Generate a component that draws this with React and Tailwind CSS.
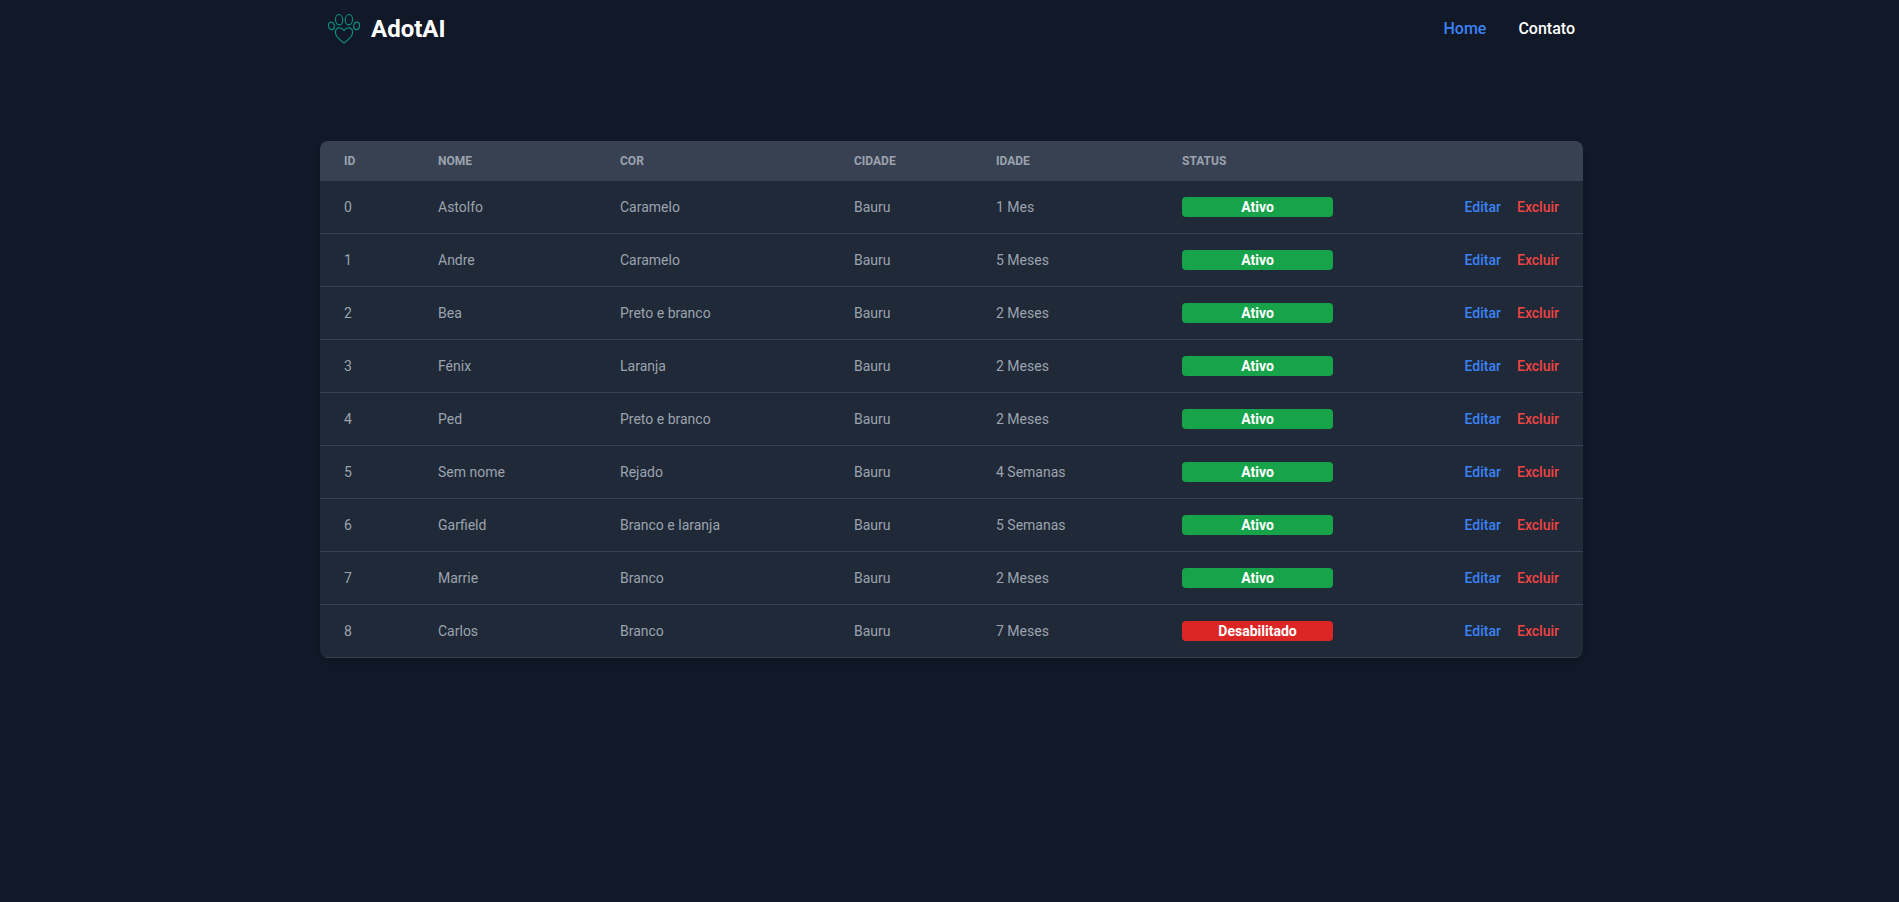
const navLinks = [
  { label: 'Home', className: 'text-[#3b82f6]' },
  { label: 'Contato', className: 'text-white' },
];

const pets = [
  { id: 0, name: 'Astolfo', color: 'Caramelo', city: 'Bauru', age: '1 Mes', active: true },
  { id: 1, name: 'Andre', color: 'Caramelo', city: 'Bauru', age: '5 Meses', active: true },
  { id: 2, name: 'Bea', color: 'Preto e branco', city: 'Bauru', age: '2 Meses', active: true },
  { id: 3, name: 'Fénix', color: 'Laranja', city: 'Bauru', age: '2 Meses', active: true },
  { id: 4, name: 'Ped', color: 'Preto e branco', city: 'Bauru', age: '2 Meses', active: true },
  { id: 5, name: 'Sem nome', color: 'Rejado', city: 'Bauru', age: '4 Semanas', active: true },
  { id: 6, name: 'Garfield', color: 'Branco e laranja', city: 'Bauru', age: '5 Semanas', active: true },
  { id: 7, name: 'Marrie', color: 'Branco', city: 'Bauru', age: '2 Meses', active: true },
  { id: 8, name: 'Carlos', color: 'Branco', city: 'Bauru', age: '7 Meses', active: false },
];

const columns = ['ID', 'Nome', 'Cor', 'Cidade', 'Idade', 'Status'];

function PawLogo() {
  return (
    <svg
      className="h-8 w-8"
      viewBox="0 1 32 32"
      fill="none"
      stroke="#0d8b80"
      strokeWidth="1.2"
      strokeLinejoin="round"
      aria-hidden="true"
    >
      <ellipse cx="3.4" cy="13.9" rx="2.9" ry="3.8" transform="rotate(-8 3.4 13.9)" />
      <ellipse cx="11.1" cy="7.7" rx="3.6" ry="5.2" transform="rotate(-4 11.1 7.7)" />
      <ellipse cx="20.9" cy="7.7" rx="3.6" ry="5.2" transform="rotate(4 20.9 7.7)" />
      <ellipse cx="28.6" cy="13.9" rx="2.9" ry="3.8" transform="rotate(8 28.6 13.9)" />
      <path d="M16 18.6C14.8 16.8 13.2 15.9 11.6 15.9C9 15.9 7.4 18 7.4 20.6C7.4 25.2 12 28.2 16 31C20 28.2 24.6 25.2 24.6 20.6C24.6 18 23 15.9 20.4 15.9C18.8 15.9 17.2 16.8 16 18.6Z" />
    </svg>
  );
}

function Header() {
  return (
    <header className="flex h-[58px] items-center justify-between px-2">
      <a href="#" className="flex items-center gap-[11px]">
        <PawLogo />
        <span className="text-2xl font-bold text-white">AdotAI</span>
      </a>
      <nav className="flex gap-8">
        {navLinks.map((link) => (
          <a key={link.label} href="#" className={`text-base font-medium ${link.className}`}>
            {link.label}
          </a>
        ))}
      </nav>
    </header>
  );
}

function PetTable() {
  return (
    <div className="overflow-hidden rounded-lg shadow-md">
      <table className="w-full table-fixed text-left text-sm text-[#9ca3af]">
        <colgroup>
          <col className="w-[94px]" />
          <col className="w-[182px]" />
          <col className="w-[234px]" />
          <col className="w-[142px]" />
          <col className="w-[186px]" />
          <col className="w-[199px]" />
          <col className="w-[226px]" />
        </colgroup>
        <thead className="bg-[#374151] text-xs uppercase">
          <tr>
            {columns.map((column) => (
              <th key={column} scope="col" className="px-6 py-3 font-bold">
                {column}
              </th>
            ))}
            <th scope="col" aria-label="Ações" className="px-6 py-3" />
          </tr>
        </thead>
        <tbody>
          {pets.map((pet) => (
            <tr key={pet.id} className="border-b border-[#374151] bg-[#1f2937]">
              <td className="px-6 py-4">{pet.id}</td>
              <td className="px-6 py-4">{pet.name}</td>
              <td className="px-6 py-4">{pet.color}</td>
              <td className="px-6 py-4">{pet.city}</td>
              <td className="px-6 py-4">{pet.age}</td>
              <td className="px-6 py-4">
                <div
                  className={`rounded text-center font-bold text-white ${
                    pet.active ? 'bg-[#16a34a]' : 'bg-[#dc2626]'
                  }`}
                >
                  {pet.active ? 'Ativo' : 'Desabilitado'}
                </div>
              </td>
              <td className="px-6 py-4">
                <div className="flex justify-end gap-4 font-medium">
                  <a href="#" className="text-[#3b82f6]">
                    Editar
                  </a>
                  <a href="#" className="text-[#ef4444]">
                    Excluir
                  </a>
                </div>
              </td>
            </tr>
          ))}
        </tbody>
      </table>
    </div>
  );
}

export default function App() {
  return (
    <div className="min-h-screen bg-[#111827] pl-1 font-[Roboto,sans-serif]">
      <div className="mx-auto max-w-[1263px]">
        <Header />
        <main className="pt-[83px]">
          <PetTable />
        </main>
      </div>
    </div>
  );
}
